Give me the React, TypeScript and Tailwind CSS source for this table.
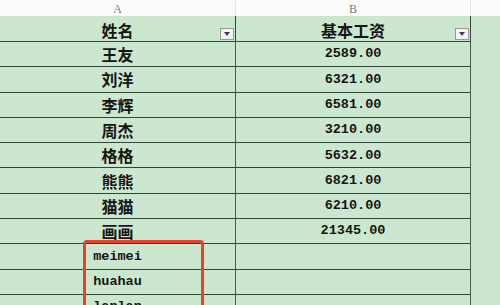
const rows: [string, string][] = [
  ["王友", "2589.00"],
  ["刘洋", "6321.00"],
  ["李辉", "6581.00"],
  ["周杰", "3210.00"],
  ["格格", "5632.00"],
  ["熊熊", "6821.00"],
  ["猫猫", "6210.00"],
  ["画画", "21345.00"],
  ["meimei", ""],
  ["huahau", ""],
  ["lanlan", ""],
];

const cjk = "font-['Noto_Sans_CJK_SC',sans-serif] font-bold text-[16px] text-[#151515]";
const mono = "font-['Liberation_Mono','Noto_Sans_CJK_SC',monospace] font-bold text-[13.5px] text-[#151515]";

function FilterButton() {
  return (
    <div className="absolute right-[1px] bottom-[1px] flex h-[12px] w-[14px] items-center justify-center border border-[#9a9a9a] bg-[#f4f4f6]">
      <div className="h-0 w-0 border-x-[3px] border-t-[4px] border-x-transparent border-t-[#404048]" />
    </div>
  );
}

function Cell({ text }: { text: string }) {
  const isAscii = /^[\x00-\x7f]*$/.test(text);
  return (
    <div className="flex h-[25.3px] items-center justify-center border-r border-b border-r-[#4a5a4e] border-b-[#34453a]">
      <span className={`${isAscii ? mono : cjk} leading-none`}>{text}</span>
    </div>
  );
}

export default function App() {
  return (
    <div className="relative h-[305px] w-[500px] overflow-hidden bg-[#d2e9d4]">
      <div className="grid h-[16px] grid-cols-[236px_235px_1fr] bg-[#fbfbfb] font-['Liberation_Serif',serif] text-[12px] text-[#7a7a7a]">
        <div className="flex items-center justify-center border-r border-[#e4e4e4]">A</div>
        <div className="flex items-center justify-center border-r border-[#e4e4e4]">B</div>
        <div />
      </div>
      <div className="grid grid-cols-[236px_235px] bg-[#cce7cf]">
        <div className="relative flex h-[26px] items-center justify-center border-r border-b border-[#34453a] pt-[3px]">
          <span className={cjk}>姓名</span>
          <FilterButton />
        </div>
        <div className="relative flex h-[26px] items-center justify-center border-r border-b border-[#34453a] pt-[3px]">
          <span className={cjk}>基本工资</span>
          <FilterButton />
        </div>
        {rows.map(([name, pay]) => (
          <div key={name} className="contents">
            <Cell text={name} />
            <Cell text={pay} />
          </div>
        ))}
      </div>
      <div className="absolute left-[83px] top-[240px] h-[90px] w-[121px] rounded-[4px] border-[3px] border-[#e5432d]" />
    </div>
  );
}
